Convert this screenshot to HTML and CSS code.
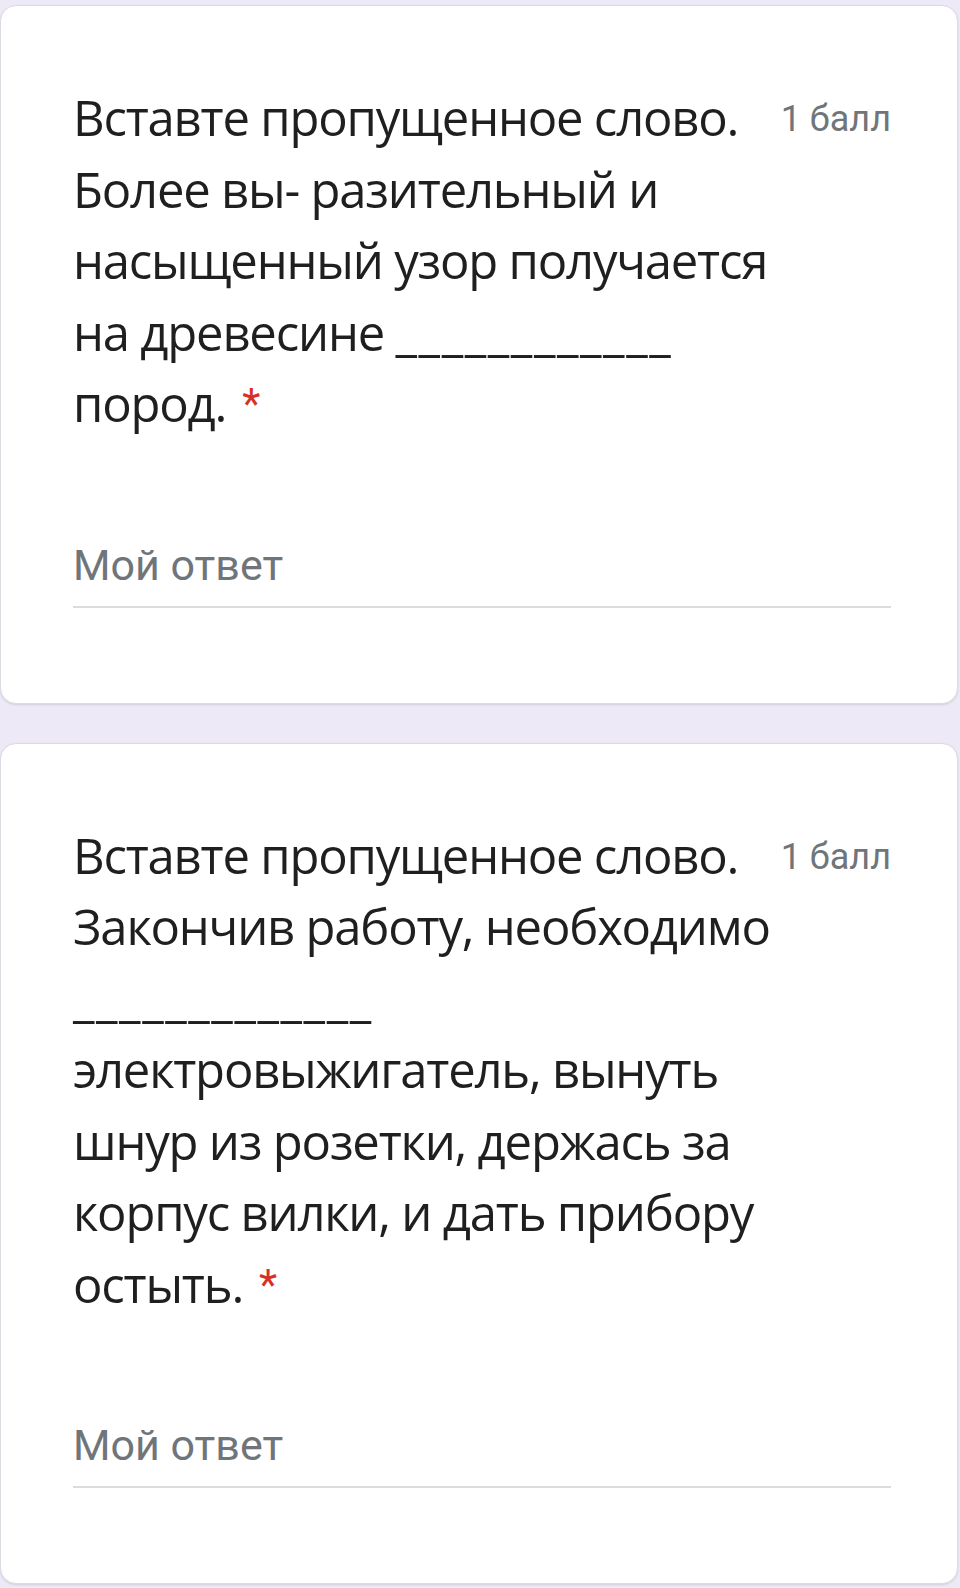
FILE: index.html
```html
<!DOCTYPE html>
<html lang="ru">
<head>
<meta charset="utf-8">
<title>Форма</title>
<link rel="stylesheet" href="styles.css">
</head>
<body>
<main class="page">
  <section class="card">
    <div class="head">
      <div class="question">Вставте пропущенное слово.<br>Более вы- разительный и<br>насыщенный узор получается<br>на древесине <span class="blank">____________</span><br>пород.<span class="req">*</span></div>
      <div class="points">1 балл</div>
    </div>
    <div class="answer">Мой ответ</div>
  </section>
  <section class="card">
    <div class="head">
      <div class="question">Вставте пропущенное слово.<br>Закончив работу, необходимо<br><span class="blank">_____________</span><br>электровыжигатель, вынуть<br>шнур из розетки, держась за<br>корпус вилки, и дать прибору<br>остыть.<span class="req">*</span></div>
      <div class="points">1 балл</div>
    </div>
    <div class="answer">Мой ответ</div>
  </section>
</main>
</body>
</html>
```
FILE: styles.css
```css
html, body {
  margin: 0;
  padding: 0;
}
body {
  background: #ede9f7;
  min-height: 1588px;
  font-family: "Open Sans", "Noto Sans", sans-serif;
}
.page {
  display: flex;
  flex-direction: column;
  gap: 39px;
  padding-top: 5px;
}
.card {
  background: #fff;
  border: 1px solid #dcdbe2;
  border-radius: 16px;
  margin-right: 2px;
  padding: 76px 66px 95px 72px;
  box-shadow: 0 1px 2px rgba(60, 64, 67, 0.15);
}
.head {
  display: flex;
  justify-content: space-between;
  align-items: flex-start;
}
.question {
  font-size: 49px;
  line-height: 71.5px;
  letter-spacing: -1.2px;
  color: #1f1f1f;
  white-space: nowrap;
}
.blank {
  letter-spacing: 1.6px;
}
.req {
  color: #d93025;
  font-family: Roboto, sans-serif;
  font-size: 42px;
  letter-spacing: 0;
  margin-left: 16px;
  vertical-align: 4px;
}
.points {
  font-family: Roboto, sans-serif;
  font-size: 36px;
  line-height: 72px;
  margin-top: 1px;
  color: #70757a;
  white-space: nowrap;
}
.answer {
  margin-top: 100px;
  font-family: Roboto, sans-serif;
  font-size: 43px;
  line-height: 50px;
  color: #70757a;
  padding-bottom: 16px;
  border-bottom: 2px solid #dadce0;
}
```
